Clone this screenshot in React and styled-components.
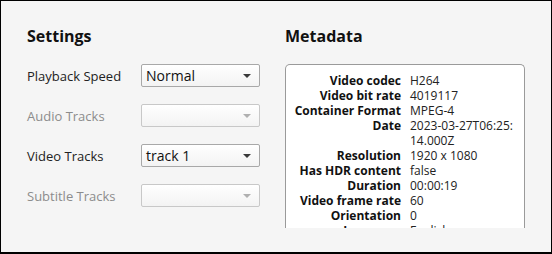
import React from 'react'
import styled, { createGlobalStyle } from 'styled-components'

const GlobalStyle = createGlobalStyle`
    html, body {
        margin: 0;
        padding: 0;
    }
    body {
        font-family: "Open Sans", "Noto Sans", sans-serif;
        color: #333;
    }
`

const settings = [
    { label: 'Playback Speed', value: 'Normal' },
    { label: 'Audio Tracks', value: '', disabled: true },
    { label: 'Video Tracks', value: 'track 1' },
    { label: 'Subtitle Tracks', value: '', disabled: true },
]

const metadata = [
    ['Video codec', 'H264'],
    ['Video bit rate', '4019117'],
    ['Container Format', 'MPEG-4'],
    ['Date', <>2023-03-27T06:25:<wbr />14.000Z</>],
    ['Resolution', '1920 x 1080'],
    ['Has HDR content', 'false'],
    ['Duration', '00:00:19'],
    ['Video frame rate', '60'],
    ['Orientation', '0'],
    ['Language', 'English'],
]

function App() {
    return (
        <>
            <GlobalStyle />
            <Window>
                <Column>
                    <Heading>Settings</Heading>
                    <SettingsList>
                        {settings.map(s => (
                            <SettingRow key={s.label}>
                                <Label disabled={s.disabled}>{s.label}</Label>
                                <Select disabled={s.disabled}>
                                    <span>{s.value}</span>
                                    <Arrow disabled={s.disabled} />
                                </Select>
                            </SettingRow>
                        ))}
                    </SettingsList>
                </Column>
                <Column $right>
                    <Heading>Metadata</Heading>
                    <MetaBox>
                        <MetaGrid>
                            {metadata.map(([k, v]) => (
                                <React.Fragment key={k}>
                                    <MetaKey>{k}</MetaKey>
                                    <MetaValue>{v}</MetaValue>
                                </React.Fragment>
                            ))}
                        </MetaGrid>
                    </MetaBox>
                </Column>
            </Window>
        </>
    )
}

export default App

// janela com a borda preta
const Window = styled.div`
    box-sizing: border-box;
    width: 552px;
    height: 254px;
    border: 1px solid #000;
    border-bottom-width: 2px;
    background: #f5f5f5;
    display: flex;
    padding: 25px 0 0 26px;
    gap: 25px;
    overflow: hidden;
`

const Column = styled.div`
    display: flex;
    flex-direction: column;
    width: ${p => (p.$right ? '240px' : '233px')};
`

const Heading = styled.h2`
    margin: 0 0 17px;
    font-size: 16px;
    line-height: 21px;
    font-weight: 700;
    color: #111;
`

const SettingsList = styled.div`
    display: flex;
    flex-direction: column;
    gap: 17px;
`

const SettingRow = styled.div`
    display: flex;
    align-items: center;
    height: 23px;
`

const Label = styled.span`
    width: 114px;
    flex-shrink: 0;
    font-size: 13px;
    color: ${p => (p.disabled ? '#8c8c8c' : '#222')};
`

// o select imitando o combobox do GTK
const Select = styled.div`
    box-sizing: border-box;
    position: relative;
    width: 120px;
    height: 23px;
    border: 1px solid ${p => (p.disabled ? '#c8c8c8' : '#a8a8a8')};
    border-radius: 2px;
    background: linear-gradient(#ffffff, #f3f3f3);
    display: flex;
    align-items: center;
    padding: 0 4px;
    font-size: 14px;
    color: #111;
`

const Arrow = styled.i`
    position: absolute;
    right: 8px;
    top: 9px;
    width: 0;
    height: 0;
    border-left: 4px solid transparent;
    border-right: 4px solid transparent;
    border-top: 4px solid ${p => (p.disabled ? '#b0b0b0' : '#3a3a3a')};
`

const MetaBox = styled.div`
    box-sizing: border-box;
    height: 164px;
    border: 1px solid #9a9a9a;
    border-bottom: none;
    border-radius: 5px 5px 0 0;
    background: #fff;
    overflow: hidden;
    padding: 8px 0 0 0;
`

const MetaGrid = styled.div`
    display: grid;
    grid-template-columns: 115px 1fr;
    column-gap: 9px;
    font-size: 12px;
    line-height: 15px;
`

const MetaKey = styled.div`
    text-align: right;
    font-weight: 700;
    color: #111;
    white-space: nowrap;
`

const MetaValue = styled.div`
    color: #222;
    padding-right: 2px;
`
